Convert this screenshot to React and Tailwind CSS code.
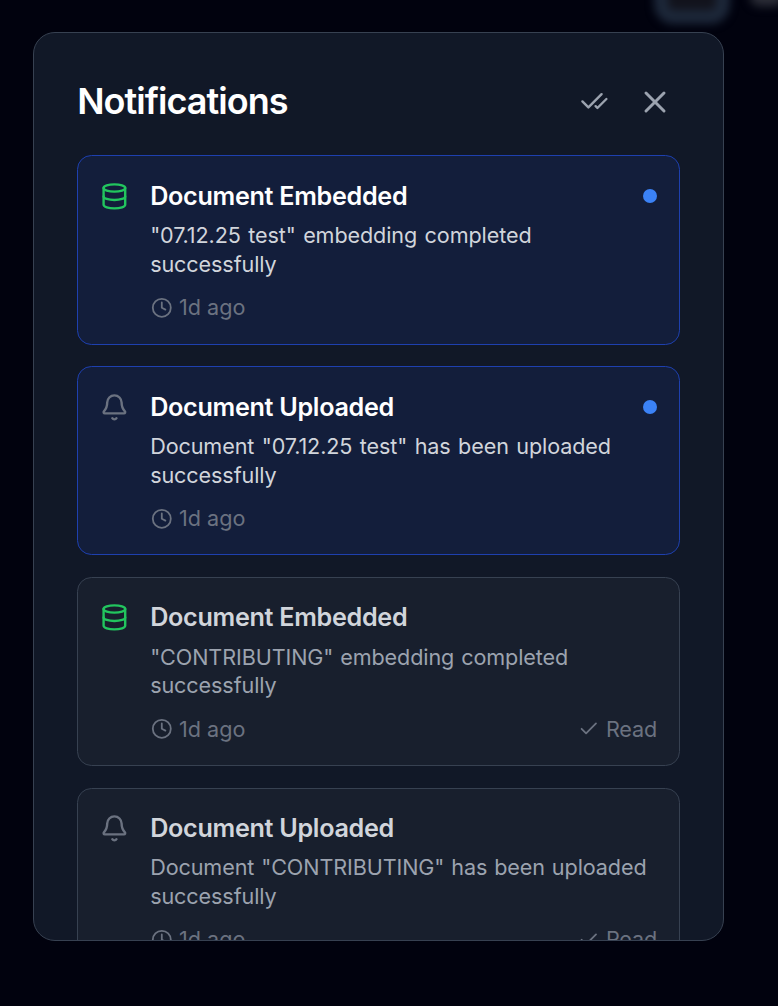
import { Bell, Check, CheckCheck, Clock, Database, X } from "lucide-react";

const notifications = [
  { id: 1, kind: "embedded", title: "Document Embedded", lines: ['"07.12.25 test" embedding completed', "successfully"], read: false },
  { id: 2, kind: "uploaded", title: "Document Uploaded", lines: ['Document "07.12.25 test" has been uploaded', "successfully"], read: false },
  { id: 3, kind: "embedded", title: "Document Embedded", lines: ['"CONTRIBUTING" embedding completed', "successfully"], read: true },
  { id: 4, kind: "uploaded", title: "Document Uploaded", lines: ['Document "CONTRIBUTING" has been uploaded', "successfully"], read: true },
];

function NotificationCard({ item }) {
  const { read } = item;
  return (
    <article
      className={`flex shrink-0 gap-[21.6px] rounded-[14.4px] border p-[21.6px] ${
        read ? "border-[#374151] bg-[#181f2d]" : "border-[#1e40af] bg-[#131e3b]"
      }`}
    >
      <div className="pt-[4px]">
        {item.kind === "embedded" ? (
          <Database className="size-[28.8px]" color="#22c55e" />
        ) : (
          <Bell className="size-[28.8px]" color="#6b7280" />
        )}
      </div>
      <div className="min-w-0 flex-1">
        <div className="flex h-9 items-center justify-between">
          <h3 className={`whitespace-nowrap text-[25.2px] leading-9 font-[560] tracking-[-0.31px] ${read ? "text-[#d1d5db]" : "text-white"}`}>
            {item.title}
          </h3>
          {!read && <span className="size-[14px] rounded-full bg-[#3b82f6]" />}
        </div>
        <p className={`mt-[7.2px] text-[21.6px] leading-[28.8px] font-[430] tracking-[-0.11px] whitespace-nowrap ${read ? "text-[#9ca3af] [word-spacing:1px]" : "text-[#d1d5db] [word-spacing:1.5px]"}`}>
          {item.lines.map((line) => (
            <span key={line} className="block">{line}</span>
          ))}
        </p>
        <div className="mt-[14.4px] flex items-center justify-between text-[21.6px] leading-[28.8px] font-[430] text-[#6b7280]">
          <span className="flex items-center gap-[6.6px] pl-[0.6px]">
            <Clock className="size-[21.6px]" />
            1d ago
          </span>
          {read && (
            <span className="flex items-center gap-[6.6px] tracking-[-0.1px]">
              <Check className="size-[21.6px]" />
              Read
            </span>
          )}
        </div>
      </div>
    </article>
  );
}

export default function App() {
  return (
    <main className="relative h-[1006px] w-[778px] overflow-hidden bg-[#01020e] pt-8 pl-[33px] font-['Inter',sans-serif]">
      <div className="absolute -top-10 left-[654px] h-[64px] w-[76px] rounded-[20px] border-[14px] border-[#1c2739] bg-[#12131c] blur-[4.5px]" />
      <div className="absolute -top-3 left-[750px] h-[18px] w-[34px] rounded-full bg-[#2c2e38] blur-[5px]" />
      <section className="relative flex h-[909px] w-[691px] flex-col overflow-hidden rounded-[22px] border border-[#374151] bg-[#111827] px-[43.2px]">
        <header className="flex h-[122.4px] shrink-0 items-center justify-between pt-[15px]">
          <h2 className="-mt-[2px] text-[36px] leading-[50px] font-[640] tracking-[-0.95px] text-white">Notifications</h2>
          <div className="flex items-center gap-[28.3px] pr-[7px] text-[#9ca3af]">
            <button aria-label="Mark all as read"><CheckCheck className="size-[28.8px]" /></button>
            <button aria-label="Close"><X className="size-9" /></button>
          </div>
        </header>
        <div className="flex flex-col gap-[21.6px]">
          {notifications.map((item) => (
            <NotificationCard key={item.id} item={item} />
          ))}
        </div>
      </section>
    </main>
  );
}
